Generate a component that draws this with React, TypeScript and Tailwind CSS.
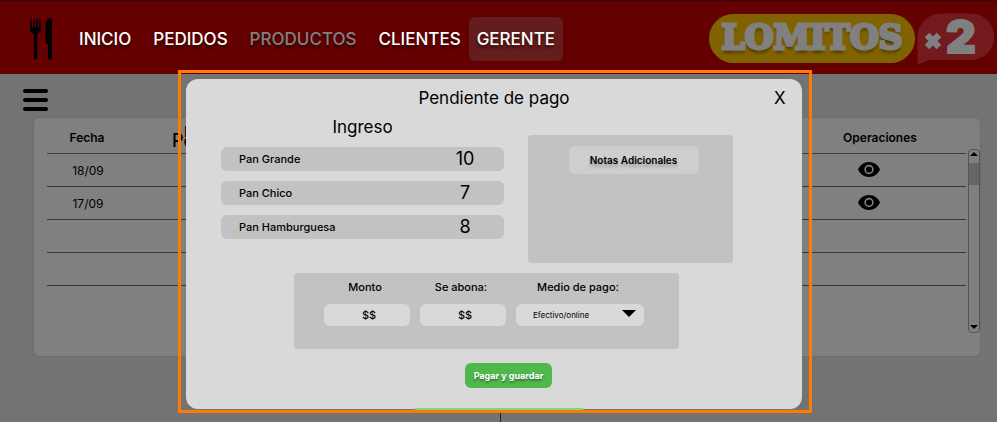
import type { ReactNode } from "react";

const navLinks = [
  { label: "INICIO", look: "text-white" },
  { label: "PEDIDOS", look: "text-white" },
  { label: "PRODUCTOS", look: "text-[#808080]" },
  { label: "CLIENTES", look: "text-white" },
  { label: "GERENTE", look: "-ml-1.5 rounded-md bg-[#641c1c] text-white" },
];

const rows = ["18/09", "17/09", "", ""];

const items = [
  { name: "Pan Grande", qty: 10 },
  { name: "Pan Chico", qty: 7 },
  { name: "Pan Hamburguesa", qty: 8 },
];

function Cutlery() {
  return (
    <svg viewBox="0 0 22 42" className="h-[42px] w-[22px]" aria-hidden="true">
      <path d="M0.500 0.500h1l.6 9h1l.3-9h1.200l.3 9h1.200l.3-9h1.200l.3 9h1l.6-9h1l.5 10q0 4-3.700 5.500V40q0 1.500-1.800 1.500T4 40V16Q0 14.500 0 10.500z" />
      <path d="M22 0v40q0 1.500-2 1.500T18 40V26h-1.500q-1-1-1-3V6Q16 0.500 22 0z" />
    </svg>
  );
}

function Eye() {
  return (
    <svg viewBox="0 0 22 15" className="h-[15px] w-[22px]" aria-hidden="true">
      <path d="M11 0C6 0 1.800 3.100 0 7.500 1.800 11.900 6 15 11 15s9.200-3.100 11-7.500C20.200 3.100 16 0 11 0z" />
      <circle cx="11" cy="7.500" r="3.900" fill="none" stroke="#808080" strokeWidth="1.600" />
    </svg>
  );
}

function Triangle({ className }: { className: string }) {
  return (
    <svg viewBox="0 0 14 7" className={className} aria-hidden="true">
      <path d="M0 0h14L7 7z" />
    </svg>
  );
}

function Header() {
  return (
    <header className="flex h-[74px] items-center border-t border-[#2e0b10] bg-[#640000] pt-[2px] pr-[2px] pl-[30px]">
      <Cutlery />
      <nav className="ml-[19px] flex items-center gap-[6px] text-[17px] font-medium [text-shadow:0_3px_3px_rgba(0,0,0,0.5)]">
        {navLinks.map((l) => (
          <a key={l.label} href="#" className={`flex h-11 items-center px-2 pt-[2px] ${l.look}`}>
            {l.label}
          </a>
        ))}
      </nav>
      <div className="ml-auto flex items-center">
        <div className="flex h-[49px] w-[206px] items-center justify-center rounded-full bg-[#806300] pb-[2px] font-['DejaVu_Serif',serif] text-[33px] leading-none font-bold text-[#808080] [-webkit-text-stroke:3px_#808080] [text-shadow:0_4px_3px_rgba(0,0,0,0.4)]">
          LOMITOS
        </div>
        <div className="relative ml-[2px] h-[52px] w-[78px] text-[#808080]">
          <svg viewBox="0 0 78 52" className="absolute inset-0 h-full w-full" aria-hidden="true">
            <path d="M24 0.500H54A23.200 23.200 0 0 1 54 47H12L0.500 52V24A23.500 23.500 0 0 1 24 0.500z" fill="#731a1d" />
          </svg>
          <div className="relative flex items-start gap-1 pl-[7px] font-black">
            <svg viewBox="0 0 18 18" className="mt-[19px] h-[18px] w-[18px]" aria-label="por">
              <path d="M3 3l12 12M15 3L3 15" stroke="#808080" strokeWidth="6.500" />
            </svg>
            <span className="text-[46px] leading-[46px] [-webkit-text-stroke:2px_#808080]">2</span>
          </div>
        </div>
      </div>
    </header>
  );
}

function OrdersCard() {
  return (
    <section className="mr-4 ml-[33px] flex h-60 rounded-md border border-[#6d6d6d] bg-[#808080] pl-[13px] text-xs">
      <table className="mr-[2px] h-[168px] flex-1 table-fixed border-collapse">
        <thead>
          <tr className="h-[35px] border-b border-[#404040]">
            <th className="w-[80px] pt-[6px] font-semibold">Fecha</th>
            <th className="relative pt-3 pl-[45px] text-left text-lg leading-5 font-medium">
              Pe
              <span className="absolute top-1 left-[57px] text-sm font-medium">E</span>
            </th>
            <th className="w-[172px] pt-[6px] font-semibold">Operaciones</th>
          </tr>
        </thead>
        <tbody>
          {rows.map((date, i) => (
            <tr key={i} className="h-[33px] border-b border-[#383838]">
              <td className="pt-[2px] pl-[2px] text-center">{date}</td>
              <td />
              <td>
                {date && (
                  <button type="button" aria-label={`Ver ${date}`} className="mx-auto block pr-[22px]">
                    <Eye />
                  </button>
                )}
              </td>
            </tr>
          ))}
        </tbody>
      </table>
      <div className="mt-[31px] flex h-[184px] w-[12px] flex-col items-center rounded-sm border border-[#555]">
        <Triangle className="mt-[2px] h-1 w-2 rotate-180" />
        <div className="mt-[7px] h-[22px] w-full bg-[#666]" />
        <Triangle className="mt-auto mb-[3px] h-1 w-2" />
      </div>
    </section>
  );
}

function Field({ id, label, children }: { id: string; label: string; children: ReactNode }) {
  return (
    <div className="flex flex-col items-center gap-[9px]">
      <label htmlFor={id} className="pr-1 text-[11px] leading-4 font-medium">
        {label}
      </label>
      {children}
    </div>
  );
}

function AmountInput({ id }: { id: string }) {
  return (
    <input
      id={id}
      defaultValue="$$"
      className="h-[22px] w-[86px] rounded-md bg-[#d9d9d9] pl-1 text-center text-[11px] font-medium"
    />
  );
}

function PaymentDialog() {
  return (
    <div className="absolute inset-0 flex items-start justify-center pt-[70px] pr-[7px]">
      <div className="relative w-[634px] border-[3px] border-[#ff7a00] pt-[6px] pr-[7px] pb-px pl-[5px]">
        <div role="dialog" aria-label="Pendiente de pago" className="h-[330px] rounded-xl bg-[#d9d9d9]">
          <div className="grid grid-cols-[28px_1fr_28px] pt-[7px] text-[17px] leading-6">
            <h2 className="col-start-2 text-center">Pendiente de pago</h2>
            <button type="button" className="text-left">
              X
            </button>
          </div>
          <div className="flex gap-6 pr-[69px] pl-[35px]">
            <div className="flex-1">
              <h3 className="mt-[5px] text-center text-[17px] leading-6">Ingreso</h3>
              <ul className="mt-2 flex flex-col gap-[10px]">
                {items.map((it) => (
                  <li
                    key={it.name}
                    className="flex h-[24px] items-center rounded-md bg-[#c2c2c2] pl-[18px] text-[11px] font-medium"
                  >
                    {it.name}
                    <span className="mr-[19px] ml-auto w-10 text-center text-lg font-normal">{it.qty}</span>
                  </li>
                ))}
              </ul>
            </div>
            <div className="mt-[25px] h-32 w-[205px] rounded-sm bg-[#c2c2c2] pt-[11px] pl-[6px]">
              <button
                type="button"
                className="mx-auto block h-[28px] w-[130px] rounded-md bg-[#cecece] text-[10px] font-semibold [text-shadow:0_3px_3px_rgba(0,0,0,0.25)]"
              >
                Notas Adicionales
              </button>
            </div>
          </div>
          <form className="mt-[10px] ml-[108px] flex h-[76px] w-[385px] gap-[10px] rounded-sm bg-[#c2c2c2] pt-[6px] pl-[30px]">
            <Field id="monto" label="Monto">
              <AmountInput id="monto" />
            </Field>
            <Field id="abona" label="Se abona:">
              <AmountInput id="abona" />
            </Field>
            <Field id="medio" label="Medio de pago:">
              <div className="relative">
                <select
                  id="medio"
                  className="block h-[22px] w-32 appearance-none rounded-md bg-[#d9d9d9] pl-[17px] text-[8px]"
                >
                  <option>Efectivo/online</option>
                </select>
                <Triangle className="pointer-events-none absolute top-[6px] right-2 h-[7px] w-[14px]" />
              </div>
            </Field>
          </form>
          <button
            type="button"
            className="mt-[14px] ml-[279px] block h-[25px] w-[87px] rounded-md bg-[#4fb84d] text-[9px] font-bold text-white [text-shadow:0_2px_2px_rgba(0,0,0,0.4)]"
          >
            Pagar y guardar
          </button>
        </div>
        <div className="absolute bottom-0 left-[234px] h-[2px] w-[168px] bg-[#7fd87d]" />
        <div className="absolute -bottom-3 left-[319px] h-[9px] w-px bg-[#222]" />
      </div>
    </div>
  );
}

export default function App() {
  return (
    <div className="relative min-h-screen overflow-hidden bg-[#737373] font-['Inter',sans-serif] text-black">
      <Header />
      <button type="button" aria-label="Menú" className="mt-[15px] mb-[6px] ml-[23px] flex w-[25px] flex-col gap-[5px]">
        <span className="h-1 w-full rounded-full bg-black" />
        <span className="h-1 w-full rounded-full bg-black" />
        <span className="h-1 w-full rounded-full bg-black" />
      </button>
      <OrdersCard />
      <PaymentDialog />
    </div>
  );
}
